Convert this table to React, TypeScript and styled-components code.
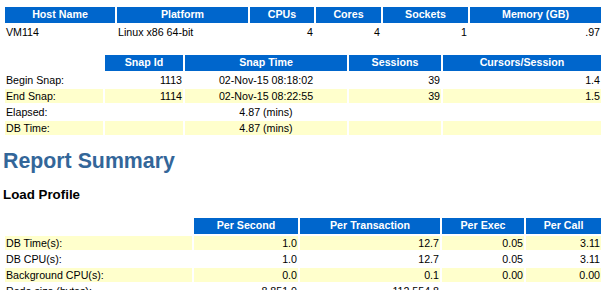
import React from "react";
import styled, { createGlobalStyle } from "styled-components";

const Global = createGlobalStyle`
  html, body { margin: 0; padding: 0; overflow: hidden; background: #ffffff; }
  body { font: bold 10pt "Liberation Sans", Arial, Helvetica, sans-serif; color: #000000; }
`;

const Page = styled.div`
  padding: 5px 0 0 3px;
  width: 600px;
`;

const Table = styled.div<{ $cols: string; $mt?: number }>`
  display: grid;
  grid-template-columns: ${(p) => p.$cols};
  gap: 2px;
  padding: 2px;
  width: 600px;
  box-sizing: border-box;
  margin-top: ${(p) => p.$mt ?? 0}px;
`;

const Th = styled.div<{ $blank?: boolean }>`
  height: 16px;
  box-sizing: border-box;
  padding: 1px 4px 3px;
  font: bold 8pt "Liberation Sans", Arial, Helvetica, sans-serif;
  line-height: 12px;
  text-align: center;
  color: #ffffff;
  background: ${(p) => (p.$blank ? "#ffffff" : "#0066cc")};
  white-space: nowrap;
  overflow: hidden;
`;

type Align = "left" | "right" | "center";

const Td = styled.div<{ $shade?: boolean; $align?: Align }>`
  height: 14px;
  box-sizing: border-box;
  padding: 1px;
  font: 8pt "Liberation Sans", Arial, Helvetica, sans-serif;
  line-height: 12px;
  color: #000000;
  text-align: ${(p) => p.$align ?? "left"};
  background: ${(p) => (p.$shade ? "#ffffcc" : "#ffffff")};
  white-space: nowrap;
  overflow: hidden;
`;

const Title = styled.h2`
  margin: 12px 0 0;
  padding: 0;
  font: bold 16pt "Liberation Sans", Arial, Helvetica, sans-serif;
  line-height: 25px;
  color: #336699;
`;

const Subtitle = styled.div`
  margin-top: 13px;
  font: bold 10pt "Liberation Sans", Arial, Helvetica, sans-serif;
  line-height: 15px;
  color: #000000;
`;

type Row = { shade: boolean; cells: string[] };

const DataTable: React.FC<{
  cols: string;
  mt?: number;
  headers: string[];
  aligns: Align[];
  rows: Row[];
}> = ({ cols, mt, headers, aligns, rows }) => (
  <Table $cols={cols} $mt={mt}>
    {headers.map((h, i) => (
      <Th key={`h${i}`} $blank={h === ""}>
        {h}
      </Th>
    ))}
    {rows.map((r, ri) =>
      r.cells.map((c, ci) => (
        <Td key={`r${ri}c${ci}`} $shade={r.shade} $align={aligns[ci]}>
          {c}
        </Td>
      ))
    )}
  </Table>
);

export default function App() {
  return (
    <>
      <Global />
      <Page>
        <DataTable
          cols="110px 131px 64px 65px 85px 131px"
          headers={["Host Name", "Platform", "CPUs", "Cores", "Sockets", "Memory (GB)"]}
          aligns={["left", "left", "right", "right", "right", "right"]}
          rows={[{ shade: false, cells: ["VM114", "Linux x86 64-bit", "4", "4", "1", ".97"] }]}
        />
        <DataTable
          cols="98px 78px 162px 92px 158px"
          mt={12}
          headers={["", "Snap Id", "Snap Time", "Sessions", "Cursors/Session"]}
          aligns={["left", "right", "center", "right", "right"]}
          rows={[
            { shade: false, cells: ["Begin Snap:", "1113", "02-Nov-15 08:18:02", "39", "1.4"] },
            { shade: true, cells: ["End Snap:", "1114", "02-Nov-15 08:22:55", "39", "1.5"] },
            { shade: false, cells: ["Elapsed:", "", "4.87 (mins)", "", ""] },
            { shade: true, cells: ["DB Time:", "", "4.87 (mins)", "", ""] },
          ]}
        />
        <Title>Report Summary</Title>
        <Subtitle>Load Profile</Subtitle>
        <DataTable
          cols="187px 104px 140px 82px 75px"
          mt={14}
          headers={["", "Per Second", "Per Transaction", "Per Exec", "Per Call"]}
          aligns={["left", "right", "right", "right", "right"]}
          rows={[
            { shade: true, cells: ["DB Time(s):", "1.0", "12.7", "0.05", "3.11"] },
            { shade: false, cells: ["DB CPU(s):", "1.0", "12.7", "0.05", "3.11"] },
            { shade: true, cells: ["Background CPU(s):", "0.0", "0.1", "0.00", "0.00"] },
            { shade: false, cells: ["Redo size (bytes):", "8,851.0", "112,554.8", "", ""] },
          ]}
        />
      </Page>
    </>
  );
}
